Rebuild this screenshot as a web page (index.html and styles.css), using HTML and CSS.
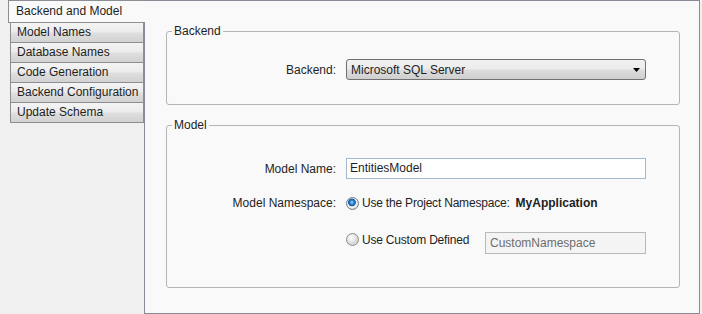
FILE: index.html
```html
<!DOCTYPE html>
<html lang="en">

<head>
    <meta charset="UTF-8">
    <meta name="viewport" content="width=device-width, initial-scale=1.0">
    <title>Model Settings</title>
    <link rel="stylesheet" href="styles.css">
</head>

<body>
    <div class="window">
        <nav class="tabs">
            <div class="tab tab-active">Backend and Model</div>
            <div class="tab">Model Names</div>
            <div class="tab">Database Names</div>
            <div class="tab">Code Generation</div>
            <div class="tab">Backend Configuration</div>
            <div class="tab">Update Schema</div>
        </nav>

        <main class="panel">
            <fieldset class="group group-backend">
                <legend>Backend</legend>
                <div class="form">
                    <label class="field-label">Backend:</label>
                    <div class="combo">
                        <span>Microsoft SQL Server</span>
                        <svg class="combo-arrow" width="7" height="4" viewBox="0 0 7 4">
                            <path d="M0 0h7L3.5 4z" fill="#000" />
                        </svg>
                    </div>
                </div>
            </fieldset>

            <fieldset class="group group-model">
                <legend>Model</legend>
                <div class="form">
                    <label class="field-label">Model Name:</label>
                    <div class="textbox">EntitiesModel</div>

                    <label class="field-label">Model Namespace:</label>
                    <div class="radio-row">
                        <span class="radio radio-checked"></span>
                        <span class="radio-text">Use the Project Namespace:</span>
                        <b class="namespace">MyApplication</b>
                    </div>

                    <div class="radio-row radio-row-custom">
                        <span class="radio"></span>
                        <span class="radio-text">Use Custom Defined</span>
                        <div class="textbox textbox-disabled">CustomNamespace</div>
                    </div>
                </div>
            </fieldset>
        </main>
    </div>
</body>

</html>
```

FILE: styles.css
```css
* {
    margin: 0;
    padding: 0;
    box-sizing: border-box;
}

body {
    background: #f0f0f0;
    font-family: "Liberation Sans", Arial, sans-serif;
    font-size: 12px;
    line-height: 16px;
    color: #1e1e1e;
}

.window {
    display: flex;
    height: 314px;
    margin-right: 2px;
}

/* tab strip on the left */
.tabs {
    width: 144px;
    flex-shrink: 0;
    display: flex;
    flex-direction: column;
}

.tab {
    margin-left: 10px;
    width: 134px;
    height: 20px;
    line-height: 19px;
    padding-left: 6px;
    border: 1px solid #8c8e94;
    border-top: none;
    background: linear-gradient(#f4f4f4 0%, #ececec 45%, #dedede 55%, #d2d2d2 100%);
    white-space: nowrap;
}

.tab-active {
    position: relative;
    z-index: 1;
    margin-left: 8px;
    margin-right: -1px;
    width: 137px;
    height: 23px;
    line-height: 21px;
    padding-left: 7px;
    border: 1px solid #8c8e94;
    border-right: none;
    background: #f9f9f9;
}

/* content panel */
.panel {
    flex: 1;
    border: 1px solid #898c95;
    background: #f9f9f9;
}

.group {
    margin: 0 19px 0 21px;
    padding: 0 32px 0 5px;
    border: 1px solid #b4b4b4;
    border-radius: 3px;
}

.group legend {
    padding: 0 2px;
    line-height: 16px;
}

.group-backend {
    margin-top: 22px;
}

.group-model {
    margin-top: 12px;
}

.form {
    display: grid;
    grid-template-columns: 164px 300px;
    column-gap: 10px;
    align-items: center;
}

.group-backend .form {
    padding: 20px 0 24px;
}

.group-model .form {
    padding: 25px 0 33px;
    row-gap: 16px;
}

.field-label {
    text-align: right;
}

.combo {
    height: 21px;
    display: flex;
    align-items: center;
    padding: 0 5px 0 4px;
    border: 1px solid #707070;
    border-radius: 3px;
    background: linear-gradient(#f2f2f2 0%, #ebebeb 48%, #dddddd 52%, #cfcfcf 100%);
}

.combo-arrow {
    margin-left: auto;
}

.textbox {
    height: 21px;
    line-height: 19px;
    padding-left: 3px;
    border: 1px solid #a3b9cd;
    background: #fff;
}

.textbox-disabled {
    width: 161px;
    height: 22px;
    line-height: 20px;
    margin-left: auto;
    padding-left: 4px;
    border-color: #b9b9b9;
    background: #f4f4f4;
    color: #6d6d6d;
}

.radio-row {
    display: flex;
    align-items: center;
    white-space: nowrap;
}

.radio-text {
    letter-spacing: -0.2px;
}

.radio-row-custom {
    grid-column: 2;
    align-items: flex-start;
    margin-top: 5px;
}

.radio-row-custom .radio {
    margin-top: 1px;
}

.radio {
    width: 13px;
    height: 13px;
    margin-right: 3px;
    flex-shrink: 0;
    border: 1px solid #8e8f8f;
    border-radius: 50%;
    background: radial-gradient(circle at 40% 35%, #ffffff 0, #ececec 3px, #d6d6d6 6px);
}

.radio-checked {
    border-color: #6e7f8f;
    background: radial-gradient(circle at 45% 40%, #b7e6ff 0, #3a95dc 1.5px, #15569d 3.5px, #dfe6ec 4.2px, #f6f6f6 5px, #d2d2d2 6.5px);
}

.namespace {
    margin-left: 6px;
    font-weight: bold;
}
```
